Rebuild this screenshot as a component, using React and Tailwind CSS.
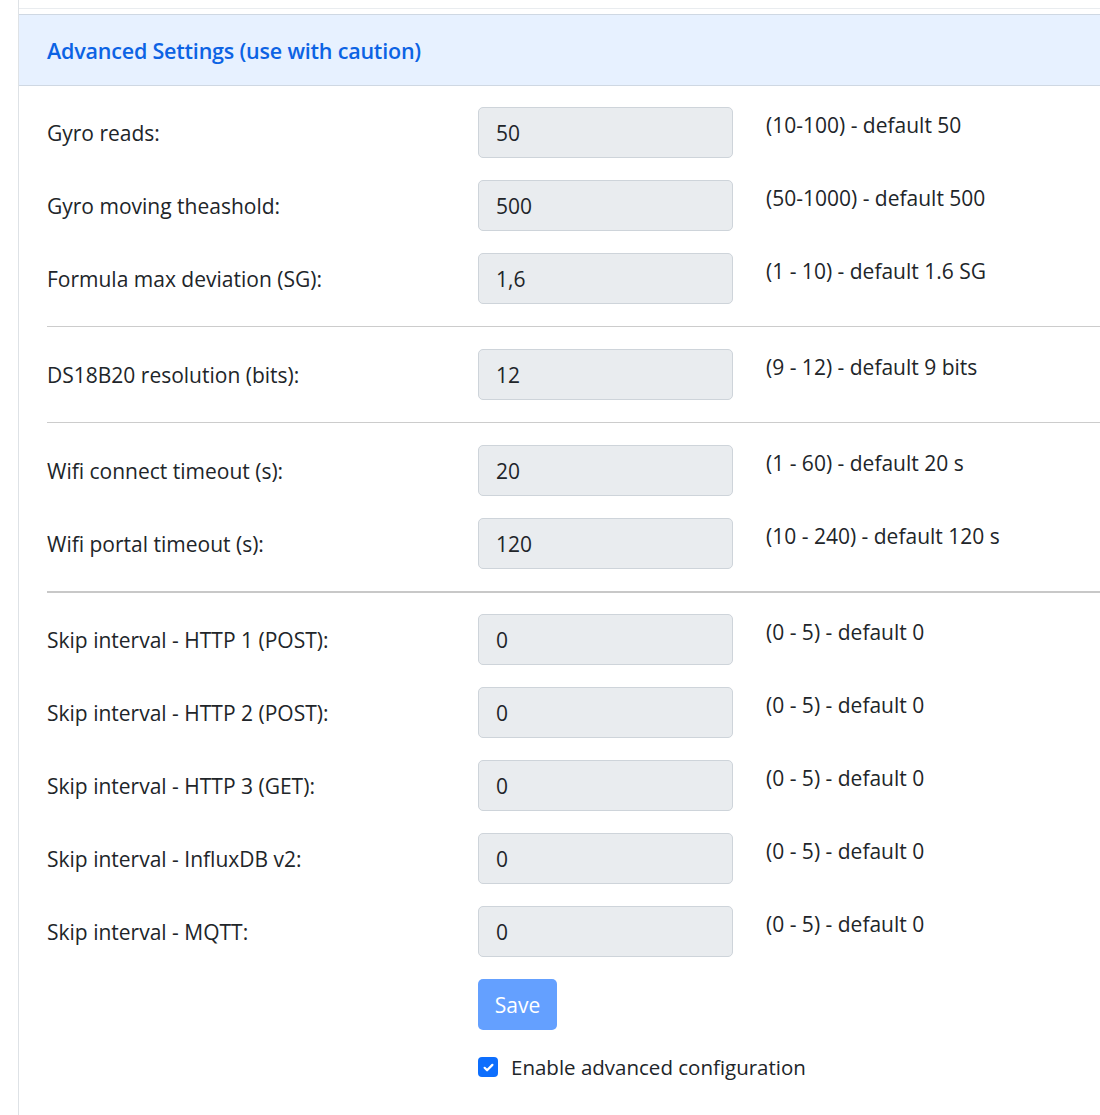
const rows = [
  [
    { label: "Gyro reads:", value: "50", help: "(10-100) - default 50" },
    { label: "Gyro moving theashold:", value: "500", help: "(50-1000) - default 500" },
    { label: "Formula max deviation (SG):", value: "1,6", help: "(1 - 10) - default 1.6 SG" },
  ],
  [{ label: "DS18B20 resolution (bits):", value: "12", help: "(9 - 12) - default 9 bits" }],
  [
    { label: "Wifi connect timeout (s):", value: "20", help: "(1 - 60) - default 20 s" },
    { label: "Wifi portal timeout (s):", value: "120", help: "(10 - 240) - default 120 s" },
  ],
  [
    { label: "Skip interval - HTTP 1 (POST):", value: "0", help: "(0 - 5) - default 0" },
    { label: "Skip interval - HTTP 2 (POST):", value: "0", help: "(0 - 5) - default 0" },
    { label: "Skip interval - HTTP 3 (GET):", value: "0", help: "(0 - 5) - default 0" },
    { label: "Skip interval - InfluxDB v2:", value: "0", help: "(0 - 5) - default 0" },
    { label: "Skip interval - MQTT:", value: "0", help: "(0 - 5) - default 0" },
  ],
];

const Field = ({ label, value, help }) => (
  <div className="flex items-start h-[51px]">
    <label className="w-[431px] h-[51px] flex items-center pt-[3px]">{label}</label>
    <div className="w-[255px] h-[51px] rounded-[5px] border border-[#ced4da] bg-[#e9ecef] flex items-center px-[17px] pt-[3px]">
      {value}
    </div>
    <div className="ml-[33px] pt-[3px]">{help}</div>
  </div>
);

const App = () => {
  return (
    <div
      className="w-[1100px] h-[1115px] overflow-hidden bg-white text-[#212529] text-[21px] leading-[1.5]"
      style={{ fontFamily: '"Open Sans", "Noto Sans", sans-serif' }}
    >
      <div className="ml-[18px] h-full border-l border-[#dee2e6]">
        <div className="h-[9px] border-b border-[#e9ecef]" />
        <div className="h-[5px]" />
        <div className="h-[72px] bg-[#e7f1ff] border-y border-[#cfd8e3] flex items-center pl-[28px] pt-[2px]">
          <span className="font-semibold text-[21.5px] text-[#0c63e4] tracking-[-0.2px]">
            Advanced Settings (use with caution)
          </span>
        </div>
        <div className="pl-[28px] pt-[21px]">
          {rows.map((group, gi) => (
            <div key={gi}>
              {gi > 0 &&
                (gi === 3 ? (
                  <div className="mt-[22px] mb-[21px] h-[2px] bg-[#c8c8c8]" />
                ) : (
                  <div className="my-[22px] h-px bg-[#cccccc]" />
                ))}
              <div className="flex flex-col gap-[22px]">
                {group.map((f) => (
                  <Field key={f.label} {...f} />
                ))}
              </div>
            </div>
          ))}
          <div className="ml-[431px] mt-[22px] flex flex-col items-start">
            <button className="h-[51px] w-[79px] rounded-[5px] bg-[#64a0ff] text-white text-[21px] pt-[2px]">
              Save
            </button>
            <div className="mt-[22px] flex items-center gap-[13px]">
              <span className="w-[20px] h-[20px] rounded-[4px] bg-[#0d6efd] flex items-center justify-center">
                <svg width="13" height="13" viewBox="0 0 20 20" fill="none">
                  <path
                    d="M4 10.5l3.8 3.8L16 6"
                    stroke="white"
                    strokeWidth="3.4"
                    strokeLinecap="round"
                    strokeLinejoin="round"
                  />
                </svg>
              </span>
              <span className="text-[20.5px]">Enable advanced configuration</span>
            </div>
          </div>
        </div>
      </div>
    </div>
  );
};

export default App;
